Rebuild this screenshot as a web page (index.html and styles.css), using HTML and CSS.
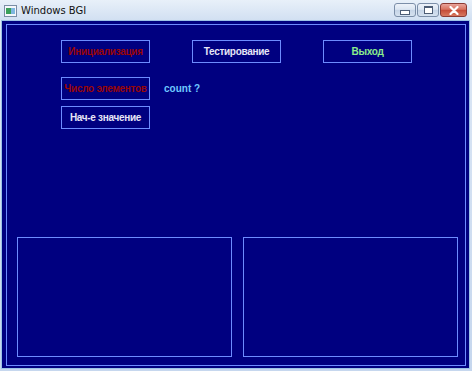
FILE: index.html
```html
<!DOCTYPE html>
<html>
<head>
<meta charset="utf-8">
<link rel="stylesheet" href="styles.css">
</head>
<body>
<div class="window">
  <div class="titlebar">
    <svg class="app-icon" width="13" height="12" viewBox="0 0 13 12">
      <rect x="0.5" y="0.5" width="12" height="11" fill="#f4f7fb" stroke="#7a8da6"/>
      <rect x="2" y="3" width="5" height="6" fill="#3aa05a"/>
      <rect x="7" y="3" width="4" height="6" fill="#7fb7e0"/>
    </svg>
    <span class="title">Windows BGI</span>
    <div class="caption-buttons">
      <div class="cbtn min"><span class="min-glyph"></span></div>
      <div class="cbtn max"><span class="max-glyph"></span></div>
      <div class="cbtn close">
        <svg width="10" height="9" viewBox="0 0 10 9"><path d="M1.5 1 L8.5 8 M8.5 1 L1.5 8" stroke="#fff" stroke-width="2.2" stroke-linecap="round"/></svg>
      </div>
    </div>
  </div>
  <div class="client">
    <div class="frame">
      <div class="row row1">
        <div class="btn red">Инициализация</div>
        <div class="btn white">Тестирование</div>
        <div class="btn green">Выход</div>
      </div>
      <div class="row row2">
        <div class="btn red">Число элементов</div>
        <span class="label">count ?</span>
      </div>
      <div class="row row3">
        <div class="btn white">Нач-е значение</div>
      </div>
      <div class="panels">
        <div class="panel"></div>
        <div class="panel"></div>
      </div>
    </div>
  </div>
</div>
</body>
</html>
```

FILE: styles.css
```css
html, body {
  margin: 0;
  padding: 0;
}
body {
  width: 472px;
  height: 371px;
  overflow: hidden;
  background: #bcd0ea;
  font-family: "Liberation Sans", Arial, sans-serif;
}
.window {
  width: 472px;
  height: 371px;
  display: flex;
  flex-direction: column;
  background: linear-gradient(#dfe9f6, #c6d7ee);
}
.titlebar {
  height: 20px;
  display: flex;
  align-items: center;
  padding-left: 4px;
  position: relative;
  background: linear-gradient(#e8f0f9, #d2e0f2);
}
.app-icon {
  display: block;
  margin-top: 1px;
}
.title {
  margin-left: 4px;
  font-family: "DejaVu Sans", sans-serif;
  font-size: 10px;
  color: #111;
}
.caption-buttons {
  position: absolute;
  right: 5px;
  top: 3px;
  display: flex;
  gap: 1px;
}
.cbtn {
  height: 14px;
  border: 1px solid #7b8ea8;
  border-radius: 3px;
  display: flex;
  align-items: center;
  justify-content: center;
  box-sizing: border-box;
}
.min, .max {
  width: 22px;
  background: linear-gradient(#edf2f9 0%, #dbe5f1 45%, #c5d4e7 50%, #d6e2f0 100%);
}
.min-glyph {
  width: 8px;
  height: 3px;
  margin-top: 5px;
  background: #fff;
  border: 1px solid #4d5d75;
}
.max-glyph {
  width: 7px;
  height: 5px;
  border: 1px solid #4d5d75;
  border-top-width: 2px;
  background: #fff;
}
.close {
  width: 27px;
  border-color: #8b3a33;
  background: linear-gradient(#e9a49b 0%, #d7725f 45%, #c44a36 50%, #d8785f 100%);
}
.client {
  flex: 1;
  margin: 0 2px 2px 1px;
  border: 1px solid #9cc3e6;
  background: #000080;
  padding: 3px 3px 2px 4px;
  display: flex;
}
.frame {
  flex: 1;
  border: 1px solid #6d8cff;
  display: flex;
  flex-direction: column;
  padding-left: 54px;
}
.row {
  display: flex;
  align-items: center;
}
.row1 {
  margin-top: 15px;
  gap: 42px;
}
.row2 {
  margin-top: 14px;
  gap: 14px;
}
.row3 {
  margin-top: 6px;
}
.btn {
  width: 89px;
  height: 23px;
  box-sizing: border-box;
  border: 1px solid #6d8cff;
  display: flex;
  align-items: center;
  justify-content: center;
  font-weight: bold;
  font-size: 10px;
  letter-spacing: -0.3px;
  white-space: nowrap;
  padding-bottom: 1px;
}
.red { color: #980606; }
.white { color: #e6e6f6; }
.green { color: #8cee8c; }
.label {
  color: #6fc8ff;
  font-weight: bold;
  font-size: 10px;
  margin-bottom: 1px;
}
.panels {
  margin-top: auto;
  margin-left: -44px;
  margin-bottom: 8px;
  display: flex;
  gap: 11px;
}
.panel {
  width: 215px;
  height: 120px;
  box-sizing: border-box;
  border: 1px solid #6d8cff;
}
```
